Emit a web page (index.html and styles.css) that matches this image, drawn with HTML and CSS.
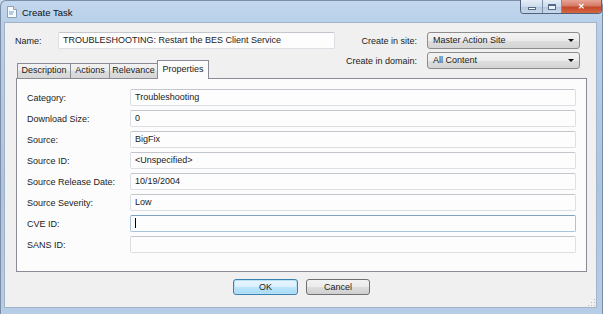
FILE: index.html
```html
<!DOCTYPE html>
<html lang="en">
<head>
    <meta charset="UTF-8">
    <title>Create Task</title>
    <link rel="stylesheet" href="styles.css">
</head>
<body>
<div class="window">
    <div class="titlebar">
        <svg class="app-icon" width="10" height="12" viewBox="0 0 10 12">
            <path d="M0.5 0.5 H6.5 L9.5 3.5 V11.5 H0.5 Z" fill="#fafcfe" stroke="#8e9fb3"/>
            <path d="M6.5 0.5 V3.5 H9.5" fill="#dfe7f0" stroke="#8e9fb3"/>
            <path d="M2 6 H7 M2 8 H6" stroke="#6c9fd6"/>
        </svg>
        <span class="title">Create Task</span>
        <div class="controls">
            <div class="ctl ctl-min"><span></span></div>
            <div class="ctl ctl-max"><span></span></div>
            <div class="ctl ctl-close">&#x2715;</div>
        </div>
    </div>

    <div class="client">
        <div class="header">
            <div class="header-left">
                <div class="name-row">
                    <span class="name-label">Name:</span>
                    <div class="field name-field">TROUBLESHOOTING: Restart the BES Client Service</div>
                </div>
                <div class="tabs">
                    <div class="tab tab-desc">Description</div>
                    <div class="tab tab-actions">Actions</div>
                    <div class="tab tab-rel">Relevance</div>
                    <div class="tab tab-props active">Properties</div>
                </div>
            </div>
            <div class="header-right">
                <div class="site-row">
                    <span class="site-label">Create in site:</span>
                    <div class="select">Master Action Site<span class="arrow"></span></div>
                </div>
                <div class="site-row">
                    <span class="site-label">Create in domain:</span>
                    <div class="select">All Content<span class="arrow"></span></div>
                </div>
            </div>
        </div>

        <div class="panel">
            <div class="prop-row"><span class="prop-label">Category:</span><div class="field">Troubleshooting</div></div>
            <div class="prop-row"><span class="prop-label">Download Size:</span><div class="field">0</div></div>
            <div class="prop-row"><span class="prop-label">Source:</span><div class="field">BigFix</div></div>
            <div class="prop-row"><span class="prop-label">Source ID:</span><div class="field">&lt;Unspecified&gt;</div></div>
            <div class="prop-row"><span class="prop-label">Source Release Date:</span><div class="field">10/19/2004</div></div>
            <div class="prop-row"><span class="prop-label">Source Severity:</span><div class="field">Low</div></div>
            <div class="prop-row"><span class="prop-label">CVE ID:</span><div class="field focused"><span class="caret"></span></div></div>
            <div class="prop-row"><span class="prop-label">SANS ID:</span><div class="field"></div></div>
        </div>

        <div class="buttons">
            <div class="button default">OK</div>
            <div class="button">Cancel</div>
        </div>
        <div class="grip"></div>
    </div>
</div>
</body>
</html>
```

FILE: styles.css
```css
* {
    box-sizing: border-box;
}
html, body {
    margin: 0;
    padding: 0;
}
body {
    width: 603px;
    height: 314px;
    overflow: hidden;
    font-family: "Liberation Sans", Arial, sans-serif;
    font-size: 9px;
    color: #1b1b1b;
    background: #c9dbee;
}
.window {
    width: 603px;
    height: 314px;
    display: flex;
    flex-direction: column;
    padding: 0 5px 6px 3px;
    border-radius: 6px 6px 0 0;
    border: 1px solid #7d8ea4;
    border-bottom: none;
    background: linear-gradient(to bottom, #c3d7ed 0%, #b7cfe9 8%, #aac5e3 60%, #b6cde7 100%);
}

/* title bar */
.titlebar {
    height: 21px;
    display: flex;
    align-items: flex-start;
}
.app-icon {
    margin: 5px 0 0 3px;
}
.title {
    margin: 6px 0 0 5px;
    font-size: 9.5px;
    color: #111;
}
.controls {
    margin: -1px -5px 0 auto;
    display: flex;
    height: 14px;
    border: 1px solid #50627a;
    border-top: none;
    border-radius: 0 0 4px 4px;
    overflow: hidden;
}
.ctl {
    height: 13px;
    display: flex;
    align-items: center;
    justify-content: center;
    background: linear-gradient(to bottom, #e4edf7 0%, #cddcec 50%, #b4c8df 51%, #c6d7ea 100%);
}
.ctl-min {
    width: 22px;
    border-right: 1px solid #7e90a7;
}
.ctl-min span {
    width: 8px;
    height: 3px;
    margin-top: 4px;
    background: #fff;
    border: 1px solid #556a86;
}
.ctl-max {
    width: 19px;
    border-right: 1px solid #7e90a7;
}
.ctl-max span {
    width: 8px;
    height: 6px;
    border: 1px solid #556a86;
    border-top-width: 2px;
    background: #eef3f9;
}
.ctl-close {
    width: 39px;
    color: #fff;
    font-size: 8px;
    font-weight: bold;
    background: linear-gradient(to bottom, #e7a597 0%, #d67a66 45%, #c4472d 55%, #d5673f 100%);
}

/* client area */
.client {
    flex: 1;
    display: flex;
    flex-direction: column;
    position: relative;
    padding: 9px 9px 0 10px;
    background: #f0f0f0;
    border: 1px solid #a2b3c7;
}
.header {
    display: flex;
    align-items: flex-start;
}
.header-left {
    width: 320px;
}
.name-row {
    display: flex;
    align-items: center;
}
.name-label {
    width: 43px;
}
.name-field {
    width: 277px;
}
.field {
    height: 17px;
    line-height: 15px;
    padding: 0 4px;
    background: #fdfdfd;
    border: 1px solid #dcdfe4;
    border-top-color: #c3c6cc;
    border-radius: 2px;
    white-space: nowrap;
}
.field.focused {
    border-color: #a9c3da;
    border-top-color: #7fa3c2;
}
.caret {
    display: inline-block;
    width: 1px;
    height: 10px;
    margin-top: 2px;
    background: #000;
    vertical-align: top;
}

/* tabs */
.tabs {
    display: flex;
    align-items: flex-end;
    margin: 11px 0 0 2px;
    height: 18px;
}
.tab {
    height: 15px;
    line-height: 13px;
    text-align: center;
    border: 1px solid #898c95;
    border-bottom: none;
    margin-left: -1px;
    background: linear-gradient(to bottom, #f2f2f2 0%, #ebebeb 50%, #dddddd 51%, #d6d6d6 100%);
}
.tab-desc {
    width: 54px;
    margin-left: 0;
}
.tab-actions {
    width: 40px;
}
.tab-rel {
    width: 49px;
}
.tab.active {
    width: 52px;
    height: 19px;
    line-height: 16px;
    margin-bottom: -1px;
    position: relative;
    z-index: 1;
    background: #fcfcfc;
}

/* site / domain */
.header-right {
    margin: 0 7px 0 auto;
    display: flex;
    flex-direction: column;
    gap: 3px;
}
.site-row {
    display: flex;
    align-items: center;
    justify-content: flex-end;
    gap: 10px;
}
.select {
    width: 153px;
    height: 17px;
    line-height: 15px;
    padding: 0 5px;
    position: relative;
    border: 1px solid #8c8c8c;
    border-radius: 3px;
    background: linear-gradient(to bottom, #f3f3f3 0%, #ececec 50%, #dedede 51%, #d4d4d4 100%);
}
.arrow {
    position: absolute;
    right: 5px;
    top: 6px;
    border-left: 3px solid transparent;
    border-right: 3px solid transparent;
    border-top: 3px solid #111;
}

/* properties panel */
.panel {
    margin: 0 0 0 1px;
    padding: 10px 10px 18px 10px;
    display: flex;
    flex-direction: column;
    gap: 4px;
    background: #fcfcfc;
    border: 1px solid #898c95;
}
.prop-row {
    display: flex;
    align-items: center;
}
.prop-label {
    width: 103px;
}
.prop-row .field {
    flex: 1;
}

/* buttons */
.buttons {
    display: flex;
    justify-content: center;
    gap: 8px;
    margin-top: 7px;
    padding-left: 1px;
}
.button {
    width: 64px;
    height: 16px;
    line-height: 14px;
    text-align: center;
    border: 1px solid #707070;
    border-radius: 3px;
    background: linear-gradient(to bottom, #f2f2f2 0%, #ebebeb 50%, #dddddd 51%, #cfcfcf 100%);
}
.button.default {
    width: 65px;
    border-color: #3c7fb1;
    box-shadow: inset 0 0 0 1px #b9e1f7;
    background: linear-gradient(to bottom, #eaf6fd 0%, #d9f0fc 50%, #bee6fd 51%, #a7d9f5 100%);
}
.grip {
    position: absolute;
    right: 1px;
    bottom: 1px;
    width: 8px;
    height: 8px;
    background: radial-gradient(circle, #b8b8b8 0.7px, transparent 1px) 0 0 / 3px 3px;
    clip-path: polygon(100% 0, 100% 100%, 0 100%);
}
```
